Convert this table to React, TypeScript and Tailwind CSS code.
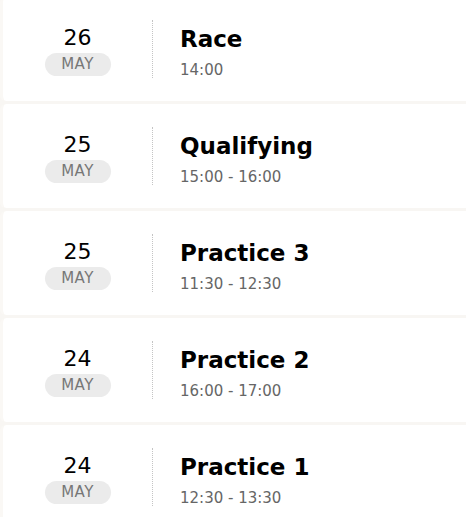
const sessions = [
  { day: "26", month: "MAY", name: "Race", time: "14:00" },
  { day: "25", month: "MAY", name: "Qualifying", time: "15:00 - 16:00" },
  { day: "25", month: "MAY", name: "Practice 3", time: "11:30 - 12:30" },
  { day: "24", month: "MAY", name: "Practice 2", time: "16:00 - 17:00" },
  { day: "24", month: "MAY", name: "Practice 1", time: "12:30 - 13:30" },
];

function SessionRow({ day, month, name, time }: (typeof sessions)[number]) {
  return (
    <div className="flex h-[104px] items-center rounded-l-md border-l-[3px] border-[#faf8f5] bg-white">
      <div className="flex w-[149px] flex-col items-center pt-[3px]">
        <div className="text-[22px] leading-[26px] text-black">{day}</div>
        <div className="mt-[2px] flex h-[23px] w-[66px] items-center justify-center rounded-full bg-[#ebebeb] text-[15px] tracking-[0.5px] text-[#777]">
          {month}
        </div>
      </div>
      <div className="h-[58px] border-l border-dotted border-[#c4c4c4]" />
      <div className="pl-[27px] pt-[6px]">
        <div className="text-[23px] font-bold leading-[28px] text-black">{name}</div>
        <div className="mt-[7px] text-[15px] leading-[20px] text-[#666]">{time}</div>
      </div>
    </div>
  );
}

export default function App() {
  return (
    <div
      className="h-[517px] w-[466px] overflow-hidden bg-[#f8f6f3]"
      style={{ fontFamily: '"DejaVu Sans", sans-serif' }}
    >
      <div className="-mt-[3px] flex flex-col gap-[3px]">
        {sessions.map((s, i) => (
          <SessionRow key={i} {...s} />
        ))}
      </div>
    </div>
  );
}
